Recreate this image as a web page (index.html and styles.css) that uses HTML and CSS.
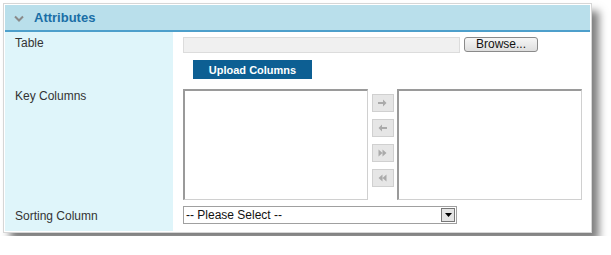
FILE: index.html
```html
<!DOCTYPE html>
<html lang="en">
<head>
    <meta charset="UTF-8">
    <title>Attributes</title>
    <link rel="stylesheet" href="styles.css">
</head>
<body>
    <div class="panel">
        <div class="panel-header">
            <svg class="chevron" width="10" height="7" viewBox="0 0 10 7"><path d="M1 1.5 L5 5.5 L9 1.5" fill="none" stroke="#8a8a8a" stroke-width="2"/></svg>
            <span class="title">Attributes</span>
        </div>
        <div class="row row-table">
            <div class="label">Table</div>
            <div class="field">
                <div class="file-input"></div>
                <button class="browse">Browse...</button>
            </div>
        </div>
        <div class="row row-upload">
            <div class="label"></div>
            <div class="field">
                <button class="upload">Upload Columns</button>
            </div>
        </div>
        <div class="row row-keys">
            <div class="label">Key Columns</div>
            <div class="field">
                <div class="listbox"></div>
                <div class="movers">
                    <span class="mover"><svg width="9" height="8" viewBox="0 0 9 8"><path d="M0 3h5V0.5L8.5 4 5 7.5V5H0z" fill="#aaa"/></svg></span>
                    <span class="mover"><svg width="9" height="8" viewBox="0 0 9 8"><path d="M9 3H4V0.5L0.5 4 4 7.5V5h5z" fill="#aaa"/></svg></span>
                    <span class="mover"><svg width="9" height="8" viewBox="0 0 9 8"><path d="M0.5 0.5L4.5 4 0.5 7.5zM4.5 0.5L8.5 4 4.5 7.5z" fill="#aaa"/></svg></span>
                    <span class="mover"><svg width="9" height="8" viewBox="0 0 9 8"><path d="M8.5 0.5L4.5 4 8.5 7.5zM4.5 0.5L0.5 4 4.5 7.5z" fill="#aaa"/></svg></span>
                </div>
                <div class="listbox"></div>
            </div>
        </div>
        <div class="row row-sort">
            <div class="label">Sorting Column</div>
            <div class="field">
                <div class="select">
                    <span class="select-text">-- Please Select --</span>
                    <span class="select-btn"><svg width="7" height="4" viewBox="0 0 7 4"><path d="M0 0h7L3.5 4z" fill="#000"/></svg></span>
                </div>
            </div>
        </div>
    </div>
</body>
</html>
```

FILE: styles.css
```css
body {
    margin: 0;
    padding: 3px;
    background-color: #fff;
    font-family: "Liberation Sans", Arial, sans-serif;
    font-size: 12px;
    color: #333;
}

.panel {
    width: 585px;
    height: 226px;
    border: 1px solid #d6d6d6;
    padding: 1px;
    background-color: #fff;
    box-shadow: 7px 8px 8px rgba(0, 0, 0, 0.5);
    display: flex;
    flex-direction: column;
}

.panel-header {
    height: 25px;
    background-color: #b9dfeb;
    border-bottom: 2px solid #4d9fcb;
    display: flex;
    align-items: center;
    padding-left: 9px;
}

.chevron {
    margin-right: 10px;
    margin-top: 1px;
}

.title {
    font-weight: bold;
    font-size: 13px;
    color: #1a6ea6;
}

.row {
    display: flex;
}

.label {
    width: 158px;
    flex-shrink: 0;
    padding-left: 10px;
    background-color: #dff5fa;
}

.field {
    flex: 1;
    display: flex;
    padding-left: 10px;
}

.row-table {
    height: 24px;
}

.row-table .label {
    padding-top: 4px;
}

.row-table .field {
    padding-top: 5px;
}

.file-input {
    width: 275px;
    height: 14px;
    border: 1px solid #dcdcdc;
    background-color: #f0f0f0;
}

.browse {
    margin-left: 4px;
    width: 74px;
    height: 15px;
    padding: 0;
    border: 1px solid #8a8a8a;
    border-radius: 3px;
    background: linear-gradient(#f6f6f6, #dedede);
    font-family: inherit;
    font-size: 12px;
    line-height: 13px;
    color: #111;
}

.row-upload {
    height: 29px;
}

.row-upload .field {
    padding-top: 4px;
    padding-left: 20px;
}

.upload {
    width: 119px;
    height: 19px;
    padding: 0;
    border: none;
    background-color: #0d5f93;
    color: #fff;
    font-family: inherit;
    font-weight: bold;
    font-size: 11px;
}

.row-keys {
    height: 118px;
}

.row-keys .label {
    padding-top: 4px;
}

.row-keys .field {
    padding-top: 4px;
}

.listbox {
    width: 182px;
    height: 108px;
    border-style: solid;
    border-width: 2px 1px 1px 2px;
    border-color: #9a9a9a #d0d0d0 #d0d0d0 #9a9a9a;
    background-color: #fff;
}

.movers {
    width: 29px;
    display: flex;
    flex-direction: column;
    align-items: center;
    gap: 7px;
    padding-top: 5px;
}

.mover {
    width: 20px;
    height: 16px;
    border: 1px solid #d0d0d0;
    background-color: #e6e6e6;
    display: flex;
    align-items: center;
    justify-content: center;
}

.row-sort {
    flex: 1;
}

.row-sort .label {
    display: flex;
    align-items: center;
    padding-bottom: 2px;
}

.row-sort .field {
    padding-top: 3px;
}

.select {
    width: 272px;
    height: 16px;
    border: 1px solid #a0a0a0;
    display: flex;
    align-items: center;
}

.select-text {
    flex: 1;
    padding-left: 2px;
    color: #111;
}

.select-btn {
    width: 14px;
    height: 14px;
    margin-right: 1px;
    border: 1px solid #777;
    box-sizing: border-box;
    background-color: #e4e4e4;
    display: flex;
    align-items: center;
    justify-content: center;
}
```
